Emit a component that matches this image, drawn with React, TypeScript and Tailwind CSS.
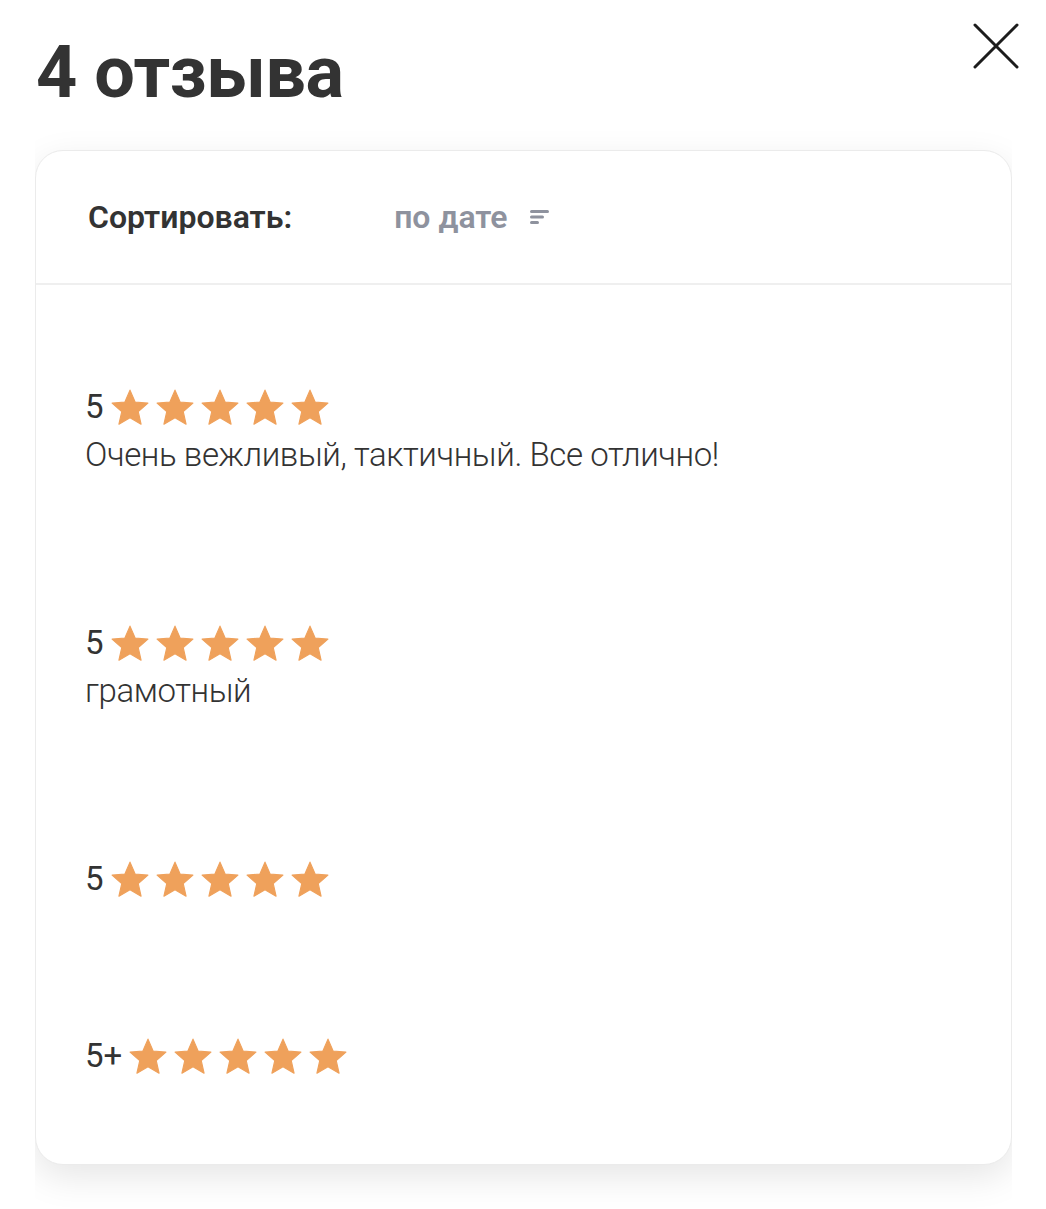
import React from 'react';

interface Review {
  rating: string;
  text?: string;
}

const reviews: Review[] = [
  { rating: '5', text: 'Очень вежливый, тактичный. Все отлично!' },
  { rating: '5', text: 'грамотный' },
  { rating: '5' },
  { rating: '5+' },
];

function Star() {
  return (
    <svg width="38" height="37" viewBox="0.4 0.6 23.2 22.6" className="shrink-0">
      <path
        d="M12 1.3L15.12 8.51 22.94 9.25 17.04 14.44 18.76 22.1 12 18.1 5.24 22.1 6.96 14.44 1.06 9.25 8.88 8.51Z"
        fill="#EFA15B"
        stroke="#EFA15B"
        strokeWidth="0.7"
        strokeLinejoin="round"
      />
    </svg>
  );
}

function SortIcon() {
  return (
    <svg width="20" height="16" viewBox="0 0 20 16" className="ml-[22px]">
      <rect x="0" y="1" width="19" height="3" rx="1.5" fill="#8E929E" />
      <rect x="0" y="6.5" width="14" height="3" rx="1.5" fill="#8E929E" />
      <rect x="0" y="12" width="9" height="3" rx="1.5" fill="#8E929E" />
    </svg>
  );
}

export default function App() {
  return (
    <div
      className="min-h-[1209px] bg-white pl-[36px] pr-[34px]"
      style={{ fontFamily: 'Roboto, "Noto Sans", sans-serif' }}
    >
      {/* Header */}
      <div className="flex items-start justify-between pt-[30px]">
        <h1 className="text-[72px] font-bold leading-[86px] tracking-[-0.5px] text-[#333333]">
          4 отзыва
        </h1>
        <button className="mr-[-8px] mt-[-8px] p-0">
          <svg width="48" height="48" viewBox="0 0 48 48">
            <path d="M3 3L45 45M45 3L3 45" stroke="#1c1c1c" strokeWidth="3" strokeLinecap="round" />
          </svg>
        </button>
      </div>

      {/* Card */}
      <div className="mt-[12px] ml-[-1px] overflow-hidden pt-[22px] pb-[44px]">
        <div className="rounded-[28px] border border-[#ebebeb] bg-white shadow-[0_12px_36px_rgba(0,0,0,0.1)]">
          <div className="flex h-[134px] items-center border-b-2 border-[#efefef] pl-[52px]">
            <span className="text-[32px] font-semibold text-[#333333]">Сортировать:</span>
            <span className="ml-[102px] text-[32px] font-semibold text-[#8E929E]">по дате</span>
            <SortIcon />
          </div>

          <div className="pt-[28px] pb-[14px] pl-[49px]">
            {reviews.map((r, i) => (
              <div
                key={i}
                className={r.text || i === reviews.length - 1 ? 'py-[72px]' : 'pt-[72px] pb-[61px]'}
              >
                <div className="flex h-[44px] items-center">
                  <span className="mr-[7px] text-[33px] font-normal text-[#333333]">{r.rating}</span>
                  <div className="flex gap-[7px]">
                    {[0, 1, 2, 3, 4].map((s) => (
                      <Star key={s} />
                    ))}
                  </div>
                </div>
                {r.text && (
                  <p className="mt-[4px] text-[33px] font-light leading-[44px] tracking-[-0.4px] text-[#333333]">
                    {r.text}
                  </p>
                )}
              </div>
            ))}
          </div>
        </div>
      </div>
    </div>
  );
}
